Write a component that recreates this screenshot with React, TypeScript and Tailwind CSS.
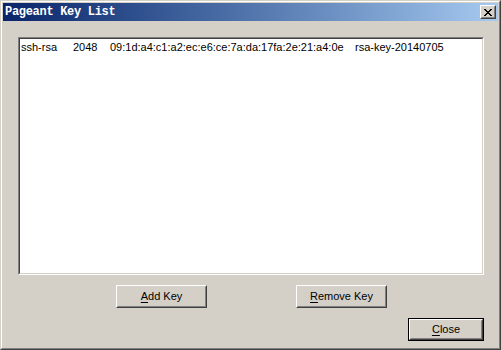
import React from "react";

type BtnProps = { label: string; accel: string; className?: string; isDefault?: boolean };

function ClassicButton({ label, accel, className, isDefault }: BtnProps) {
  const rest = label.slice(accel.length);
  const face = (
    <div className="flex h-full w-full items-center justify-center border border-t-white border-l-white border-r-[#404040] border-b-[#404040]">
      <div className="flex h-full w-full items-center justify-center border border-t-[#d4d0c8] border-l-[#d4d0c8] border-r-[#808080] border-b-[#808080] text-[11px] leading-none text-black">
        <span>
          <span className="underline underline-offset-[2px]">{accel}</span>
          {rest}
        </span>
      </div>
    </div>
  );
  if (isDefault) {
    return <div className={`border border-black ${className ?? ""}`}>{face}</div>;
  }
  return <div className={className}>{face}</div>;
}

function CloseGlyph() {
  const rows = ["XX....XX", ".XX..XX.", "..XXXX..", "...XX...", "..XXXX..", ".XX..XX.", "XX....XX"];
  return (
    <svg width="8" height="7" viewBox="0 0 8 7" shapeRendering="crispEdges">
      {rows.map((r, y) =>
        r.split("").map((c, x) => (c === "X" ? <rect key={`${x}-${y}`} x={x} y={y} width="1" height="1" fill="#000" /> : null))
      )}
    </svg>
  );
}

export default function App() {
  return (
    <div className="h-[350px] w-[501px] border border-t-[#d4d0c8] border-l-[#d4d0c8] border-r-[#404040] border-b-[#404040] bg-[#d4d0c8] font-['Liberation_Sans',Arial,sans-serif]">
      <div className="flex h-full flex-col border border-t-white border-l-white border-r-[#808080] border-b-[#808080] p-px">
        {/* title bar */}
        <div className="flex h-[18px] items-center justify-between bg-gradient-to-r from-[#0a246a] to-[#a6caf0] pl-[2px] pr-[2px]">
          <span className="font-['Liberation_Mono',monospace] text-[12px] font-bold leading-none tracking-[-0.3px] text-white">
            Pageant Key List
          </span>
          <div className="h-[14px] w-[16px] border border-t-white border-l-white border-r-[#404040] border-b-[#404040] bg-[#d4d0c8]">
            <div className="flex h-full w-full items-center justify-center border border-t-[#d4d0c8] border-l-[#d4d0c8] border-r-[#808080] border-b-[#808080]">
              <CloseGlyph />
            </div>
          </div>
        </div>

        {/* key list */}
        <div className="ml-[15px] mt-[16px] h-[238px] w-[466px] border border-t-[#808080] border-l-[#808080] border-r-white border-b-white">
          <div className="h-full w-full border border-t-[#404040] border-l-[#404040] border-r-[#d4d0c8] border-b-[#d4d0c8] bg-white">
            <div className="flex h-[16px] items-center pl-px text-[11px] leading-none text-black">
              <span className="w-[52px]">ssh-rsa</span>
              <span className="w-[37px]">2048</span>
              <span className="w-[245px]">09:1d:a4:c1:a2:ec:e6:ce:7a:da:17fa:2e:21:a4:0e</span>
              <span>rsa-key-20140705</span>
            </div>
          </div>
        </div>

        {/* add / remove */}
        <div className="mt-[10px] flex justify-center gap-[89px] pl-[2px]">
          <ClassicButton label="Add Key" accel="A" className="h-[23px] w-[91px]" />
          <ClassicButton label="Remove Key" accel="R" className="h-[23px] w-[91px]" />
        </div>

        {/* close */}
        <div className="mt-[10px] flex pl-[405px]">
          <ClassicButton label="Close" accel="C" isDefault className="h-[23px] w-[76px]" />
        </div>
      </div>
    </div>
  );
}
